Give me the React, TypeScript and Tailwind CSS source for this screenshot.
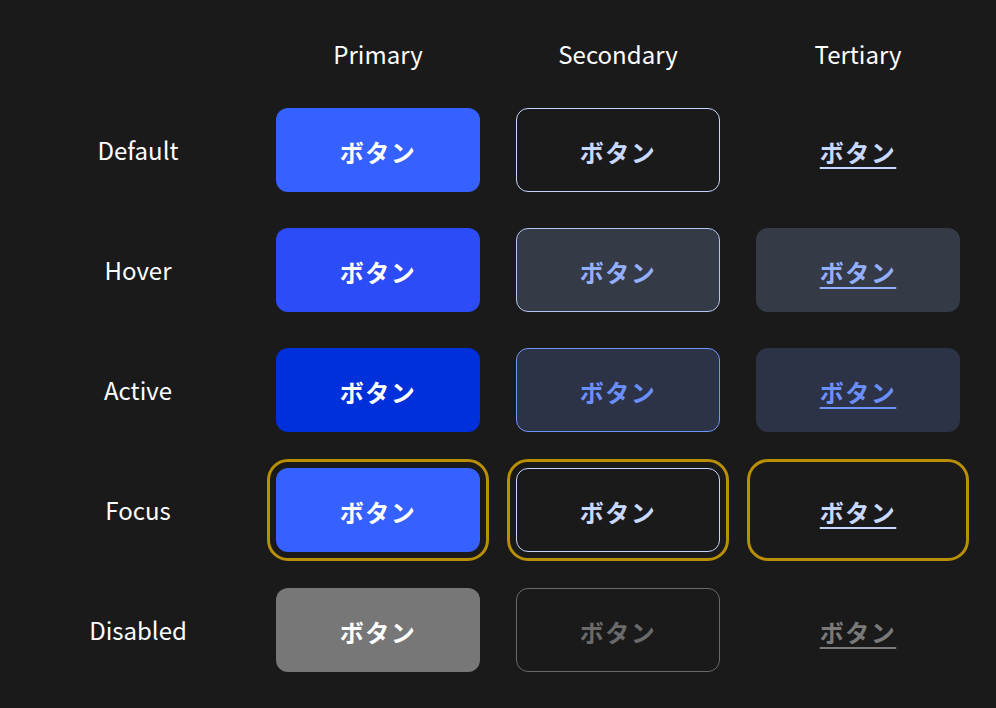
import React from "react";

const font = { fontFamily: '"Noto Sans CJK JP", "Noto Sans", sans-serif' };

const rows = [
  {
    label: "Default",
    primary: "bg-[#3461ff] text-white",
    secondary: "border border-[#c5d3ff] text-[#c9d8ff]",
    tertiary: "text-[#c9d8ff]",
  },
  {
    label: "Hover",
    primary: "bg-[#2b4cf6] text-white",
    secondary: "border border-[#b3c4f2] bg-[#353a47] text-[#93afff]",
    tertiary: "bg-[#353a47] text-[#93afff]",
  },
  {
    label: "Active",
    primary: "bg-[#0030da] text-white",
    secondary: "border border-[#6f93ff] bg-[#2d3347] text-[#6b8fff]",
    tertiary: "bg-[#2d3347] text-[#6b8fff]",
  },
  {
    label: "Focus",
    primary: "bg-[#3461ff] text-white outline-[3px] outline-solid outline-[#b88f05] outline-offset-[6px]",
    secondary: "border border-[#c5d3ff] text-[#c9d8ff] outline-[3px] outline-solid outline-[#b88f05] outline-offset-[6px]",
    tertiary: "text-[#c9d8ff] outline-[3px] outline-solid outline-[#b88f05] outline-offset-[6px]",
  },
  {
    label: "Disabled",
    primary: "bg-[#777777] text-white",
    secondary: "border border-[#6a6a6a] text-[#6a6a6a]",
    tertiary: "text-[#7a7a7a]",
  },
];

const Btn = ({ cls, underline }: { cls: string; underline?: boolean }) => (
  <div
    className={`w-[204px] h-[84px] pt-[4px] rounded-[12px] flex items-center justify-center text-[24px] font-bold tracking-[1.5px] ${cls}`}
  >
    <span
      className={
        underline
          ? "underline decoration-[2px] underline-offset-[5px]"
          : ""
      }
    >
      ボタン
    </span>
  </div>
);

export default function App() {
  return (
    <div className="min-h-screen w-full bg-[#1a1a1a] text-white" style={font}>
      <div className="px-[18px] pt-[34px] pb-[40px]">
        <div className="grid grid-cols-[240px_240px_240px_240px] h-[40px] text-[24px]">
          <div />
          <div className="flex items-center justify-center">Primary</div>
          <div className="flex items-center justify-center">Secondary</div>
          <div className="flex items-center justify-center">Tertiary</div>
        </div>
        <div className="mt-[34px] grid grid-cols-[240px_240px_240px_240px] gap-y-[36px]">
          {rows.map((r) => (
            <React.Fragment key={r.label}>
              <div className="h-[84px] flex items-center justify-center text-[24px]">
                {r.label}
              </div>
              <div className="flex items-center justify-center">
                <Btn cls={r.primary} />
              </div>
              <div className="flex items-center justify-center">
                <Btn cls={r.secondary} />
              </div>
              <div className="flex items-center justify-center">
                <Btn cls={r.tertiary} underline />
              </div>
            </React.Fragment>
          ))}
        </div>
      </div>
    </div>
  );
}
